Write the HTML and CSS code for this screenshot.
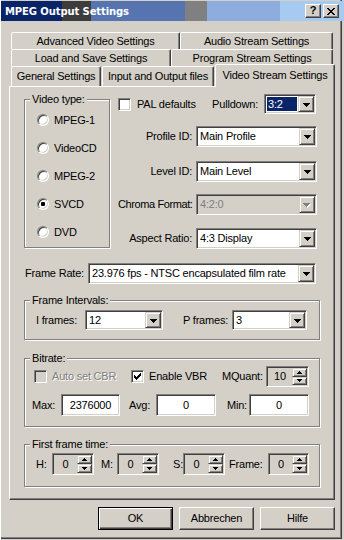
FILE: index.html
```html
<!DOCTYPE html>
<html>
<head>
<meta charset="utf-8">
<title>MPEG Output Settings</title>
<link rel="stylesheet" href="styles.css">
</head>
<body>
<div class="window">
  <div class="titlebar">
    <span class="title">MPEG Output Settings</span>
    <span class="capbtn help">?</span>
    <span class="capbtn close"><svg width="8" height="7" viewBox="0 0 8 7" shape-rendering="crispEdges"><path d="M0 0h2v1h1v1h2v-1h1v-1h2v1h-1v1h-1v1h-1v1h1v1h1v1h1v1h-2v-1h-1v-1h-2v1h-1v1h-2v-1h1v-1h1v-1h1v-1h-1v-1h-1v-1h-1z"/></svg></span>
  </div>

  <div class="tabs">
    <div class="tabrow r1">
      <div class="tab t-adv">Advanced Video Settings</div>
      <div class="tab t-audio">Audio Stream Settings</div>
    </div>
    <div class="tabrow r2">
      <div class="tab t-load">Load and Save Settings</div>
      <div class="tab t-prog">Program Stream Settings</div>
    </div>
    <div class="tabrow r3">
      <div class="tab t-gen">General Settings</div>
      <div class="tab t-io">Input and Output files</div>
      <div class="tab t-video active">Video Stream Settings</div>
    </div>
  </div>

  <div class="panel">
    <div class="top">
      <div class="group g-video">
        <span class="glabel">Video type:</span>
        <div class="rrow"><span class="radio"></span><span>MPEG-1</span></div>
        <div class="rrow"><span class="radio"></span><span>VideoCD</span></div>
        <div class="rrow"><span class="radio"></span><span>MPEG-2</span></div>
        <div class="rrow"><span class="radio checked"><span class="dot"></span></span><span>SVCD</span></div>
        <div class="rrow"><span class="radio"></span><span>DVD</span></div>
      </div>

      <div class="rightcol">
        <div class="row-a">
          <span class="chk"></span>
          <span class="pal">PAL defaults</span>
          <span class="pd-label">Pulldown:</span>
          <span class="combo c-pull">
            <span class="val"><span class="sel">3:2</span></span>
            <span class="ddbtn"><svg width="7" height="4" viewBox="0 0 7 4" shape-rendering="crispEdges"><path d="M0 0h7v1h-1v1h-1v1h-1v1h-1v-1h-1v-1h-1v-1h-1z"/></svg></span>
          </span>
        </div>
        <div class="frow fr-b">
          <span class="flabel">Profile ID:</span>
          <span class="combo c-wide">
            <span class="val">Main Profile</span>
            <span class="ddbtn"><svg width="7" height="4" viewBox="0 0 7 4" shape-rendering="crispEdges"><path d="M0 0h7v1h-1v1h-1v1h-1v1h-1v-1h-1v-1h-1v-1h-1z"/></svg></span>
          </span>
        </div>
        <div class="frow fr-c">
          <span class="flabel">Level ID:</span>
          <span class="combo c-wide">
            <span class="val">Main Level</span>
            <span class="ddbtn"><svg width="7" height="4" viewBox="0 0 7 4" shape-rendering="crispEdges"><path d="M0 0h7v1h-1v1h-1v1h-1v1h-1v-1h-1v-1h-1v-1h-1z"/></svg></span>
          </span>
        </div>
        <div class="frow fr-d">
          <span class="flabel">Chroma Format:</span>
          <span class="combo c-wide disabled">
            <span class="val">4:2:0</span>
            <span class="ddbtn"><svg width="8" height="5" viewBox="0 0 8 5" shape-rendering="crispEdges"><path fill="#fff" d="M1 1h7v1h-1v1h-1v1h-1v1h-1v-1h-1v-1h-1v-1h-1z"/><path fill="#808080" d="M0 0h7v1h-1v1h-1v1h-1v1h-1v-1h-1v-1h-1v-1h-1z"/></svg></span>
          </span>
        </div>
        <div class="frow fr-e">
          <span class="flabel">Aspect Ratio:</span>
          <span class="combo c-wide">
            <span class="val">4:3 Display</span>
            <span class="ddbtn"><svg width="7" height="4" viewBox="0 0 7 4" shape-rendering="crispEdges"><path d="M0 0h7v1h-1v1h-1v1h-1v1h-1v-1h-1v-1h-1v-1h-1z"/></svg></span>
          </span>
        </div>
      </div>
    </div>

    <div class="frate">
      <span class="fr-label">Frame Rate:</span>
      <span class="combo c-rate">
        <span class="val">23.976 fps - NTSC encapsulated film rate</span>
        <span class="ddbtn"><svg width="7" height="4" viewBox="0 0 7 4" shape-rendering="crispEdges"><path d="M0 0h7v1h-1v1h-1v1h-1v1h-1v-1h-1v-1h-1v-1h-1z"/></svg></span>
      </span>
    </div>

    <div class="group g-intervals">
      <span class="glabel">Frame Intervals:</span>
      <div class="irow">
        <span class="l-if">I frames:</span>
        <span class="combo c-if">
          <span class="val">12</span>
          <span class="ddbtn"><svg width="7" height="4" viewBox="0 0 7 4" shape-rendering="crispEdges"><path d="M0 0h7v1h-1v1h-1v1h-1v1h-1v-1h-1v-1h-1v-1h-1z"/></svg></span>
        </span>
        <span class="l-pf">P frames:</span>
        <span class="combo c-pf">
          <span class="val">3</span>
          <span class="ddbtn"><svg width="7" height="4" viewBox="0 0 7 4" shape-rendering="crispEdges"><path d="M0 0h7v1h-1v1h-1v1h-1v1h-1v-1h-1v-1h-1v-1h-1z"/></svg></span>
        </span>
      </div>
    </div>

    <div class="group g-bitrate">
      <span class="glabel">Bitrate:</span>
      <div class="brow1">
        <span class="citem ci-auto"><span class="chk dis"></span><span class="distext">Auto set CBR</span></span>
        <span class="citem ci-vbr"><span class="chk"><svg width="7" height="7" viewBox="0 0 7 7" shape-rendering="crispEdges"><path d="M0 2h1v3h-1zM1 3h1v3h-1zM2 4h1v3h-1zM3 3h1v3h-1zM4 2h1v3h-1zM5 1h1v3h-1zM6 0h1v3h-1z"/></svg></span><span>Enable VBR</span></span>
        <span class="l-mq">MQuant:</span>
        <span class="spin sp-mq">
          <span class="sval">10</span>
          <span class="sbtns">
            <span class="sbtn"><svg width="5" height="3" viewBox="0 0 5 3" shape-rendering="crispEdges"><path d="M2 0h1v1h1v1h1v1h-5v-1h1v-1h1z"/></svg></span>
            <span class="sbtn"><svg width="5" height="3" viewBox="0 0 5 3" shape-rendering="crispEdges"><path d="M0 0h5v1h-1v1h-1v1h-1v-1h-1v-1h-1z"/></svg></span>
          </span>
        </span>
      </div>
      <div class="brow2">
        <span class="l-max">Max:</span>
        <span class="edit e-max">2376000</span>
        <span class="l-avg">Avg:</span>
        <span class="edit e-avg">0</span>
        <span class="l-min">Min:</span>
        <span class="edit e-min">0</span>
      </div>
    </div>

    <div class="group g-first">
      <span class="glabel">First frame time:</span>
      <div class="frow2">
        <span class="l-h">H:</span>
        <span class="spin sp-t">
          <span class="sval">0</span>
          <span class="sbtns">
            <span class="sbtn"><svg width="5" height="3" viewBox="0 0 5 3" shape-rendering="crispEdges"><path d="M2 0h1v1h1v1h1v1h-5v-1h1v-1h1z"/></svg></span>
            <span class="sbtn"><svg width="5" height="3" viewBox="0 0 5 3" shape-rendering="crispEdges"><path d="M0 0h5v1h-1v1h-1v1h-1v-1h-1v-1h-1z"/></svg></span>
          </span>
        </span>
        <span class="l-m">M:</span>
        <span class="spin sp-t">
          <span class="sval">0</span>
          <span class="sbtns">
            <span class="sbtn"><svg width="5" height="3" viewBox="0 0 5 3" shape-rendering="crispEdges"><path d="M2 0h1v1h1v1h1v1h-5v-1h1v-1h1z"/></svg></span>
            <span class="sbtn"><svg width="5" height="3" viewBox="0 0 5 3" shape-rendering="crispEdges"><path d="M0 0h5v1h-1v1h-1v1h-1v-1h-1v-1h-1z"/></svg></span>
          </span>
        </span>
        <span class="l-s">S:</span>
        <span class="spin sp-t">
          <span class="sval">0</span>
          <span class="sbtns">
            <span class="sbtn"><svg width="5" height="3" viewBox="0 0 5 3" shape-rendering="crispEdges"><path d="M2 0h1v1h1v1h1v1h-5v-1h1v-1h1z"/></svg></span>
            <span class="sbtn"><svg width="5" height="3" viewBox="0 0 5 3" shape-rendering="crispEdges"><path d="M0 0h5v1h-1v1h-1v1h-1v-1h-1v-1h-1z"/></svg></span>
          </span>
        </span>
        <span class="l-f">Frame:</span>
        <span class="spin sp-f">
          <span class="sval">0</span>
          <span class="sbtns">
            <span class="sbtn"><svg width="5" height="3" viewBox="0 0 5 3" shape-rendering="crispEdges"><path d="M2 0h1v1h1v1h1v1h-5v-1h1v-1h1z"/></svg></span>
            <span class="sbtn"><svg width="5" height="3" viewBox="0 0 5 3" shape-rendering="crispEdges"><path d="M0 0h5v1h-1v1h-1v1h-1v-1h-1v-1h-1z"/></svg></span>
          </span>
        </span>
      </div>
    </div>
  </div>

  <div class="buttons">
    <span class="btn default">OK</span>
    <span class="btn">Abbrechen</span>
    <span class="btn">Hilfe</span>
  </div>
</div>
</body>
</html>
```

FILE: styles.css
```css
* { box-sizing: border-box; }
html, body { margin: 0; padding: 0; }
body {
  width: 344px;
  height: 540px;
  overflow: hidden;
  background: #d4d0c8;
  font-family: "Liberation Sans", Arial, sans-serif;
  font-size: 11px;
  letter-spacing: -0.2px;
  line-height: 13px;
  color: #000;
}
svg { display: block; }

.window {
  width: 344px;
  height: 540px;
  padding-top: 1px;
  background: #d4d0c8;
  box-shadow:
    inset 1px 0 0 #fff,
    inset -2px -1px 0 #d4d0c8,
    inset -3px -2px 0 #404040,
    inset -4px -3px 0 #808080;
}

/* title bar */
.titlebar {
  height: 20px;
  margin-left: 1px;
  display: flex;
  align-items: center;
  background: linear-gradient(to right,
    #0a246a 0 61px, #3c3c3c 61px 90px, #5574b0 90px 184px,
    #808080 184px 206px, #8cadde 206px 279px, #a6caf0 279px);
}
.title {
  flex: 1;
  margin-left: 4px;
  font-family: "DejaVu Sans", Verdana, sans-serif;
  font-weight: bold;
  font-size: 10px;
  letter-spacing: -0.1px;
  color: #fff;
}
.capbtn {
  width: 16px;
  height: 14px;
  display: flex;
  align-items: center;
  justify-content: center;
  background: #d4d0c8;
  border: 1px solid;
  border-color: #fff #404040 #404040 #fff;
  box-shadow: inset -1px -1px 0 #808080;
}
.help {
  margin-right: 2px;
  font-weight: bold;
  font-size: 11px;
  letter-spacing: 0;
  padding-bottom: 1px;
}
.close { margin-right: 5px; }

/* tabs */
.tabs { margin: 11px 0 0 11px; }
.tabrow { display: flex; align-items: flex-start; }
.r1, .r2 { height: 17px; }
.r3 { height: 20px; }
.tab {
  height: 100%;
  display: flex;
  align-items: center;
  justify-content: center;
  white-space: nowrap;
  background: #d4d0c8;
  border: 1px solid;
  border-bottom: 0;
  border-color: #fff #404040 transparent #fff;
  box-shadow: inset -1px 0 0 #808080;
  border-radius: 2px 2px 0 0;
}
.t-adv { width: 169px; }
.t-audio { width: 153px; }
.t-load { width: 160px; }
.t-prog { width: 162px; }
.t-gen { width: 90px; }
.t-io { width: 112px; margin-left: 1px; }
.t-video { width: 120px; margin-left: 1px; }
.active {
  position: relative;
  z-index: 1;
  height: 23px;
  margin-top: -2px;
  padding-bottom: 2px;
}

/* panel */
.panel {
  margin-left: 9px;
  width: 326px;
  height: 414px;
  border: 1px solid;
  border-color: #fff #404040 #404040 #fff;
  box-shadow: inset -1px -1px 0 #808080;
}
.top { display: flex; align-items: flex-start; margin-left: 14px; }

.group {
  position: relative;
  border: 1px solid #808080;
  box-shadow: inset 1px 1px 0 #fff, 1px 1px 0 #fff;
}
.glabel {
  position: absolute;
  top: -7px;
  left: 5px;
  padding: 0 2px 0 2px;
  background: #d4d0c8;
  white-space: nowrap;
}

.g-video {
  margin-top: 12px;
  width: 86px;
  height: 149px;
  padding-top: 6px;
}
.rrow {
  height: 28px;
  display: flex;
  align-items: center;
  padding-left: 12px;
}
.radio {
  width: 12px;
  height: 12px;
  margin-right: 5px;
  border-radius: 50%;
  background: #fff;
  border: 1px solid;
  border-color: #808080 #fff #fff #808080;
  box-shadow: inset 1px 1px 0 #404040, inset -1px -1px 0 #d4d0c8;
  display: flex;
  align-items: center;
  justify-content: center;
}
.dot {
  width: 4px;
  height: 4px;
  border-radius: 1px;
  background: #000;
}

.rightcol {
  margin-left: 8px;
  margin-top: 7px;
  width: 199px;
}
.row-a {
  height: 20px;
  display: flex;
  align-items: center;
}
.chk {
  width: 13px;
  height: 13px;
  flex: none;
  background: #fff;
  border: 1px solid;
  border-color: #808080 #fff #fff #808080;
  box-shadow: inset 1px 1px 0 #404040, inset -1px -1px 0 #d4d0c8;
  display: flex;
  align-items: center;
  justify-content: center;
}
.chk.dis { background: #d4d0c8; }
.pal { margin-left: 6px; flex: 1; }
.pd-label { margin-right: 6px; }
.c-pull { width: 52px; height: 20px; margin-right: 1px; }

.frow {
  height: 21px;
  display: flex;
  align-items: center;
}
.fr-b { margin-top: 12px; }
.fr-c { margin-top: 14px; }
.fr-d { margin-top: 12px; }
.fr-e { margin-top: 13px; }
.flabel {
  width: 78px;
  padding-right: 4px;
  text-align: right;
  white-space: nowrap;
}
.fr-d .flabel { letter-spacing: -0.4px; }
.c-wide { width: 121px; height: 21px; }

/* combo box */
.combo {
  display: flex;
  background: #fff;
  border: 1px solid;
  border-color: #808080 #fff #fff #808080;
  box-shadow: inset 1px 1px 0 #404040, inset -1px -1px 0 #d4d0c8;
  padding: 1px;
}
.val {
  flex: 1;
  display: flex;
  align-items: center;
  padding-left: 2px;
  white-space: nowrap;
  overflow: hidden;
}
.sel {
  align-self: stretch;
  flex: 1;
  margin: 1px 1px 1px -1px;
  padding-left: 1px;
  display: flex;
  align-items: center;
  background: #0a246a;
  color: #fff;
}
.ddbtn {
  width: 16px;
  flex: none;
  display: flex;
  align-items: center;
  justify-content: center;
  background: #d4d0c8;
  border: 1px solid;
  border-color: #d4d0c8 #404040 #404040 #d4d0c8;
  box-shadow: inset 1px 1px 0 #fff, inset -1px -1px 0 #808080;
  padding-top: 1px;
}
.combo.disabled { background: #d4d0c8; }
.combo.disabled .val { color: #808080; }

/* frame rate */
.frate {
  display: flex;
  align-items: center;
  margin: 14px 0 0 15px;
  height: 21px;
}
.fr-label { width: 63px; }
.c-rate { width: 228px; height: 21px; }

/* frame intervals */
.g-intervals {
  margin: 16px 0 0 14px;
  width: 296px;
  height: 40px;
  padding: 9px 0 0 11px;
}
.irow { display: flex; align-items: center; height: 20px; }
.l-if { width: 49px; }
.c-if { width: 78px; height: 20px; }
.l-pf { width: 49px; margin-left: 20px; }
.c-pf { width: 75px; height: 20px; }

/* bitrate */
.g-bitrate {
  margin: 18px 0 0 14px;
  width: 296px;
  height: 69px;
  padding: 7px 0 0 9px;
}
.brow1 { display: flex; align-items: center; height: 21px; }
.citem { display: flex; align-items: center; }
.citem .chk { margin-right: 5px; }
.ci-auto { width: 97px; }
.ci-vbr { width: 91px; }
.distext { color: #808080; text-shadow: 1px 1px 0 #fff; }
.l-mq { width: 44px; }
.sp-mq { width: 43px; height: 21px; }

.brow2 { display: flex; align-items: center; height: 22px; margin: 7px 0 0 -2px; }
.l-max { width: 29px; }
.l-avg { width: 27px; margin-left: 9px; }
.l-min { width: 22px; margin-left: 11px; }
.edit {
  height: 22px;
  display: flex;
  align-items: center;
  justify-content: center;
  background: #fff;
  border: 1px solid;
  border-color: #808080 #fff #fff #808080;
  box-shadow: inset 1px 1px 0 #404040, inset -1px -1px 0 #d4d0c8;
}
.e-max { width: 59px; }
.e-avg { width: 60px; }
.e-min { width: 60px; }

/* spin */
.spin {
  display: flex;
  background: #d4d0c8;
  border: 1px solid;
  border-color: #808080 #fff #fff #808080;
  box-shadow: inset 1px 1px 0 #404040, inset -1px -1px 0 #d4d0c8;
  padding: 1px;
}
.sval {
  flex: 1;
  display: flex;
  align-items: center;
  justify-content: center;
}
.sbtns { width: 15px; display: flex; flex-direction: column; }
.sbtn {
  flex: 1;
  display: flex;
  align-items: center;
  justify-content: center;
  background: #d4d0c8;
  border: 1px solid;
  border-color: #d4d0c8 #404040 #404040 #d4d0c8;
  box-shadow: inset 1px 1px 0 #fff, inset -1px -1px 0 #808080;
}

/* first frame */
.g-first {
  margin: 17px 0 0 14px;
  width: 296px;
  height: 43px;
  padding: 8px 0 0 11px;
}
.frow2 { display: flex; align-items: center; height: 22px; }
.l-h { width: 16px; }
.l-m { width: 16px; margin-left: 7px; }
.l-s { width: 10px; margin-left: 14px; }
.l-f { width: 39px; margin-left: 4px; }
.sp-t { width: 42px; height: 22px; }
.sp-f { width: 41px; height: 22px; }

/* buttons */
.buttons {
  display: flex;
  gap: 6px;
  margin: 7px 0 0 98px;
}
.btn {
  width: 75px;
  height: 23px;
  display: flex;
  align-items: center;
  justify-content: center;
  background: #d4d0c8;
  border: 1px solid;
  border-color: #fff #404040 #404040 #fff;
  box-shadow: inset -1px -1px 0 #808080;
}
.btn.default {
  border-color: #000;
  box-shadow: inset 1px 1px 0 #fff, inset -1px -1px 0 #404040, inset -2px -2px 0 #808080;
}
```
